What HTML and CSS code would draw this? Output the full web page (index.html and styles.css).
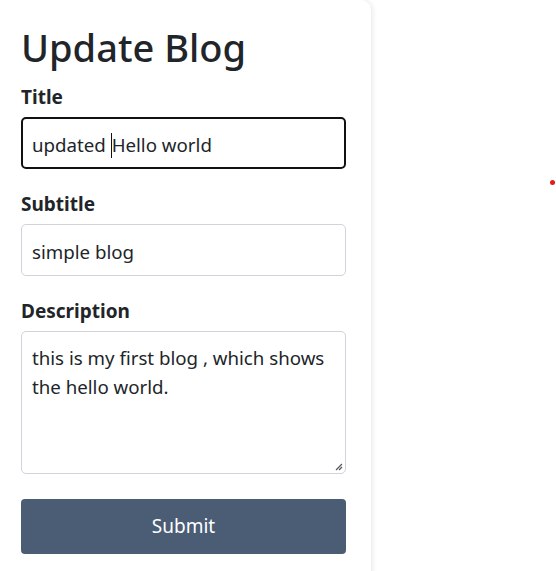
FILE: index.html
```html
<!DOCTYPE html>
<html>
<head>
<meta charset="utf-8">
<link rel="stylesheet" href="styles.css">
</head>
<body>
<div class="page">
  <div class="card">
    <h1 class="heading">Update Blog</h1>
    <form class="form">
      <div class="group">
        <label class="label">Title</label>
        <div class="field field-focus">updated <span class="caret"></span>Hello world</div>
      </div>
      <div class="group">
        <label class="label">Subtitle</label>
        <div class="field">simple blog</div>
      </div>
      <div class="group">
        <label class="label">Description</label>
        <div class="field area">this is my first blog , which shows the hello world.
          <svg class="grip" width="9" height="9" viewBox="0 0 9 9"><path d="M8 2 L2 8 M8 5 L5 8" stroke="#555" stroke-width="1.2" fill="none"/></svg>
        </div>
      </div>
      <div class="button">Submit</div>
    </form>
  </div>
  <span class="dot"></span>
</div>
</body>
</html>
```
FILE: styles.css
```css
html, body {
  margin: 0;
  padding: 0;
  background: #fff;
}
.page {
  position: relative;
  width: 556px;
  height: 571px;
  overflow: hidden;
  font-family: "Noto Sans", "Open Sans", sans-serif;
  color: #212529;
}
.card {
  width: 325px;
  height: 600px;
  padding: 24px 25px 0 21px;
  background: #fff;
  border-radius: 0 10px 0 0;
  box-shadow: 2px 0 5px rgba(0,0,0,0.08);
}
.heading {
  margin: 0 0 15px;
  font-size: 38px;
  font-weight: 500;
  line-height: 46px;
}
.group {
  margin-bottom: 23px;
}
.label {
  display: block;
  font-weight: 700;
  font-size: 19px;
  line-height: 24px;
  margin-bottom: 8px;
}
.field {
  position: relative;
  box-sizing: border-box;
  height: 52px;
  border: 1px solid #ced4da;
  border-radius: 5px;
  padding: 4px 10px 0;
  font-size: 18.7px;
  line-height: 46px;
  color: #212529;
}
.field-focus {
  border: 2px solid #111;
  padding: 3px 9px 0;
}
.caret {
  display: inline-block;
  width: 1px;
  height: 25px;
  background: #111;
  vertical-align: -6px;
}
.area {
  height: 143px;
  line-height: 29px;
  padding-top: 11px;
}
.grip {
  position: absolute;
  right: 2px;
  bottom: 2px;
}
.button {
  margin-top: 3px;
  height: 55px;
  line-height: 55px;
  background: #4a5d75;
  color: #fff;
  text-align: center;
  font-size: 19px;
  border-radius: 4px;
}
.group:nth-child(3) {
  margin-bottom: 25px;
}
.dot {
  position: absolute;
  left: 550px;
  top: 180px;
  width: 5px;
  height: 5px;
  border-radius: 50%;
  background: #e31b1b;
}
```
